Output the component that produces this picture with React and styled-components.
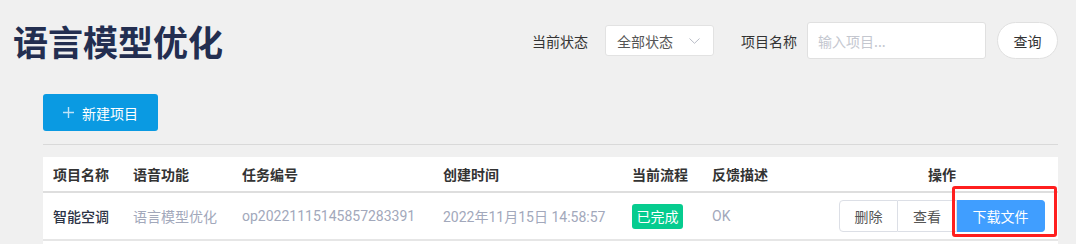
import React from "react";
import styled, { createGlobalStyle } from "styled-components";

const Global = createGlobalStyle`
  html, body { margin: 0; padding: 0; background: #f0f0f0; }
  body { font-family: Roboto, "Noto Sans CJK SC", sans-serif; font-size: 14px; color: #333; }
  * { box-sizing: border-box; }
`;

const Page = styled.div`
  padding: 22px 18px 0 13px;
`;

const TopBar = styled.div`
  display: flex;
  align-items: center;
  height: 37px;
`;

const Title = styled.h1`
  margin: 0;
  font-family: "Noto Sans CJK SC", sans-serif;
  font-size: 35px;
  line-height: 37px;
  font-weight: 700;
  color: #232e50;
  letter-spacing: 0;
  flex: 1;
`;

const FilterLabel = styled.span`
  font-family: "Noto Sans CJK SC", sans-serif;
  font-size: 14px;
  color: #333;
  margin-right: ${(p) => p.$gap}px;
`;

const Select = styled.div`
  width: 109px;
  height: 31px;
  background: #fff;
  border: 1px solid #e2e2e2;
  border-radius: 3px;
  display: flex;
  align-items: center;
  justify-content: space-between;
  padding: 0 13px 0 11px;
  margin-right: 27px;
  color: #555;
  font-family: "Noto Sans CJK SC", sans-serif;
`;

const Input = styled.input`
  width: 179px;
  height: 37px;
  border: 1px solid #e0e0e0;
  border-radius: 3px;
  background: #fff;
  padding: 0 10px;
  font-family: "Noto Sans CJK SC", sans-serif;
  font-size: 14px;
  outline: none;
  margin-right: 11px;
  &::placeholder { color: #c4c7cf; }
`;

const QueryButton = styled.button`
  width: 61px;
  height: 37px;
  border-radius: 19px;
  border: 1px solid #e0e0e0;
  background: #fff;
  color: #333;
  font-family: "Noto Sans CJK SC", sans-serif;
  font-size: 14px;
  padding: 0;
`;

const Content = styled.div`
  margin: 35px 0 0 30px;
`;

const PrimaryButton = styled.button`
  width: 115px;
  height: 37px;
  background: #0a9ae2;
  color: #fff;
  border: none;
  border-radius: 3px;
  display: flex;
  align-items: center;
  padding: 0 0 0 20px;
  gap: 8px;
  font-family: "Noto Sans CJK SC", sans-serif;
  font-size: 14px;
`;

const Divider = styled.div`
  height: 1px;
  background: #d9d9d9;
  margin-top: 13px;
`;

const TableWrap = styled.div`
  background: #fff;
  margin-top: 12px;
  padding-bottom: 20px;
`;

const Table = styled.table`
  width: 100%;
  border-collapse: collapse;
  table-layout: fixed;
`;

const Th = styled.th`
  height: 35px;
  padding: 0 0 0 ${(p) => (p.$center ? 0 : 10)}px;
  text-align: ${(p) => (p.$center ? "center" : "left")};
  font-family: "Noto Sans CJK SC", sans-serif;
  font-weight: 700;
  font-size: 14px;
  color: #333;
  border-bottom: 2px solid #dedede;
  vertical-align: middle;
`;

const Td = styled.td`
  height: 48px;
  padding: 0 0 0 ${(p) => (p.$center ? 0 : 10)}px;
  text-align: ${(p) => (p.$center ? "center" : "left")};
  font-size: 14px;
  color: ${(p) => (p.$strong ? "#2c3345" : "#a2a8bb")};
  font-weight: ${(p) => (p.$strong ? 500 : 400)};
  border-bottom: 2px solid #e6e6e6;
  vertical-align: middle;
  white-space: nowrap;
`;

const Badge = styled.span`
  display: inline-flex;
  align-items: center;
  justify-content: center;
  width: 51px;
  height: 25px;
  background: #06cc8f;
  color: #fff;
  border-radius: 3px;
  font-family: "Noto Sans CJK SC", sans-serif;
  font-size: 14px;
`;

const Group = styled.div`
  display: inline-flex;
  position: relative;
  vertical-align: middle;
`;

const GroupButton = styled.button`
  height: 32px;
  width: ${(p) => p.$w}px;
  padding: 0;
  font-family: "Noto Sans CJK SC", sans-serif;
  font-size: 14px;
  background: ${(p) => (p.$primary ? "#409eff" : "#fff")};
  color: ${(p) => (p.$primary ? "#fff" : "#555")};
  border: 1px solid ${(p) => (p.$primary ? "#409eff" : "#dcdfe6")};
  border-left-width: ${(p) => (p.$first ? 1 : 0)}px;
  border-radius: ${(p) => (p.$first ? "4px 0 0 4px" : p.$primary ? "0 4px 4px 0" : "0")};
`;

const Highlight = styled.div`
  position: absolute;
  left: -5px;
  top: -14px;
  width: 105px;
  height: 51px;
  border: 3px solid #ff1f1f;
  border-radius: 3px;
  pointer-events: none;
`;

const Highlighted = styled.div`
  position: relative;
  display: inline-flex;
`;

export default function App() {
  return (
    <>
      <Global />
      <Page>
        <TopBar>
          <Title>语言模型优化</Title>
          <FilterLabel $gap={17}>当前状态</FilterLabel>
          <Select>
            <span>全部状态</span>
            <svg width="11" height="6" viewBox="0 0 11 6">
              <path d="M0.5 0.5 L5.5 5.3 L10.5 0.5" fill="none" stroke="#b8bcc6" strokeWidth="1" />
            </svg>
          </Select>
          <FilterLabel $gap={10}>项目名称</FilterLabel>
          <Input placeholder="输入项目..." />
          <QueryButton>查询</QueryButton>
        </TopBar>
        <Content>
          <PrimaryButton>
            <svg width="11" height="11" viewBox="0 0 11 11">
              <path d="M5.5 0 V11 M0 5.5 H11" stroke="#bfe3f8" strokeWidth="1.4" />
            </svg>
            <span>新建项目</span>
          </PrimaryButton>
          <Divider />
          <TableWrap>
            <Table>
              <colgroup>
                <col style={{ width: 80 }} />
                <col style={{ width: 109 }} />
                <col style={{ width: 201 }} />
                <col style={{ width: 189 }} />
                <col style={{ width: 80 }} />
                <col style={{ width: 124 }} />
                <col style={{ width: 232 }} />
              </colgroup>
              <thead>
                <tr>
                  <Th>项目名称</Th>
                  <Th>语音功能</Th>
                  <Th>任务编号</Th>
                  <Th>创建时间</Th>
                  <Th>当前流程</Th>
                  <Th>反馈描述</Th>
                  <Th $center>操作</Th>
                </tr>
              </thead>
              <tbody>
                <tr>
                  <Td $strong>智能空调</Td>
                  <Td>语言模型优化</Td>
                  <Td>op20221115145857283391</Td>
                  <Td>2022年11月15日 14:58:57</Td>
                  <Td><Badge>已完成</Badge></Td>
                  <Td>OK</Td>
                  <Td $center>
                    <Group>
                      <GroupButton $first $w={59}>删除</GroupButton>
                      <GroupButton $w={59}>查看</GroupButton>
                      <Highlighted>
                        <GroupButton $primary $w={88}>下载文件</GroupButton>
                        <Highlight />
                      </Highlighted>
                    </Group>
                  </Td>
                </tr>
              </tbody>
            </Table>
          </TableWrap>
        </Content>
      </Page>
    </>
  );
}
